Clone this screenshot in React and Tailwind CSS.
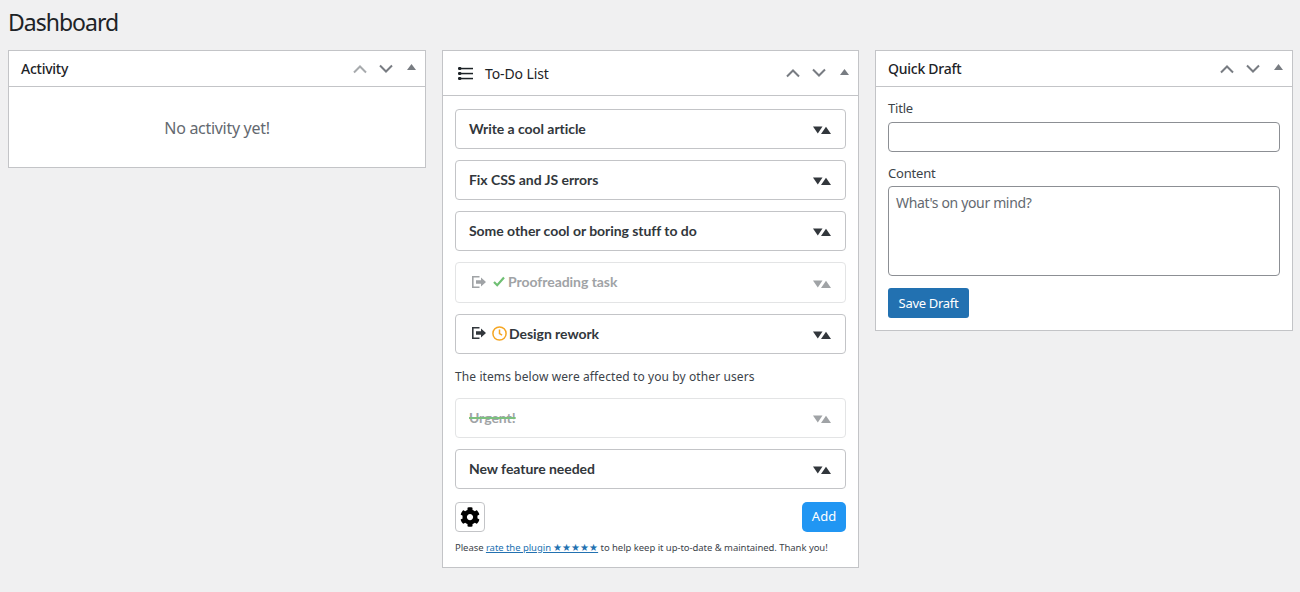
import { FaCog } from 'react-icons/fa';

const WP_FONT = "font-['Noto_Sans','Open_Sans',sans-serif]";
const ITEM_FONT = "font-['Lato','Open_Sans',sans-serif]";

function Handles({ upDisabled }) {
  return (
    <div className="flex items-center">
      <svg width="16" height="10" viewBox="0 0 16 10" fill="none" stroke="currentColor" strokeWidth="2" className={upDisabled ? 'text-[#a7aaad]' : 'text-[#787c82]'}>
        <path d="M2 8.5 8 2.5l6 6" />
      </svg>
      <svg width="16" height="10" viewBox="0 0 16 10" fill="none" stroke="currentColor" strokeWidth="2" className="ml-[10px] text-[#787c82]">
        <path d="M2 1.5l6 6 6-6" />
      </svg>
      <svg width="9" height="6" viewBox="0 0 9 6" className="ml-[13px] mb-[3px] fill-[#787c82]">
        <path d="M4.5 0 9 6H0z" />
      </svg>
    </div>
  );
}

function Card({ title, icon, tall, upDisabled, children }) {
  return (
    <section className="border border-[#c3c4c7] bg-white">
      <div className={`flex items-center justify-between border-b border-[#c3c4c7] pl-3 pr-[9px] ${tall ? 'h-[45px]' : 'h-[36px]'}`}>
        <div className="flex items-center">
          {icon}
          <h2 className={`text-[14px] text-[#1d2327] ${tall ? 'font-normal tracking-[-0.1px]' : 'font-medium tracking-[-0.25px]'}`}>{title}</h2>
        </div>
        <Handles upDisabled={upDisabled} />
      </div>
      {children}
    </section>
  );
}

function ListIcon() {
  return (
    <svg width="15" height="13" viewBox="0 0 15 13" className="ml-[3px] mr-[12px] fill-[#1d2327]">
      <rect x="0" y="0" width="3.4" height="3" rx="1.2" />
      <rect x="0" y="5" width="3.4" height="3" rx="1.2" />
      <rect x="0" y="10" width="3.4" height="3" rx="1.2" />
      <rect x="3" y="0.8" width="12" height="1.5" />
      <rect x="3" y="5.8" width="12" height="1.5" />
      <rect x="3" y="10.8" width="12" height="1.5" />
    </svg>
  );
}

function ExitIcon({ className }) {
  return (
    <svg width="14" height="12" viewBox="0 0 14 12" className={className}>
      <path d="M0 0h7.5v1.6H1.6v8.8h5.9V12H0z" fill="currentColor" />
      <path d="M4 4.3h5V1.6L14 6l-5 4.4V7.7H4z" fill="currentColor" />
    </svg>
  );
}

function Carets() {
  return (
    <svg width="18" height="8" viewBox="0 0 18 8" className="mt-[2px] fill-current">
      <path d="M0 .5h9.5L4.8 7.5z" />
      <path d="M13 .8 18 8H8z" />
    </svg>
  );
}

function TodoItem({ label, done, strike, exit, status, height = 'h-[40px]' }) {
  return (
    <div className={`flex items-center justify-between rounded-[4px] border pl-[13px] pr-[14px] ${height} ${done ? 'border-[#e3e4e5] text-[#a0a3a6]' : 'border-[#c3c4c7] text-[#32373c]'}`}>
      <div className={`flex items-center pb-[2px] text-[14px] font-bold tracking-[-0.05px] ${ITEM_FONT}`}>
        {exit && <ExitIcon className="ml-[3px] mr-[7px]" />}
        {status === 'check' && (
          <svg width="12" height="11" viewBox="0 0 12 11" fill="none" stroke="#6fbf73" strokeWidth="2.2" className="mr-[3px]">
            <path d="M1 6l3.2 3.2L11 1.5" />
          </svg>
        )}
        {status === 'clock' && (
          <svg width="15" height="15" viewBox="0 0 15 15" fill="none" stroke="#f5a623" strokeWidth="1.5" className="mr-[2px] -ml-[1px]">
            <circle cx="7.5" cy="7.5" r="6.6" />
            <path d="M7.5 3.6v4l2.6 1.5" />
          </svg>
        )}
        {strike ? (
          <span className="line-through decoration-[#7cc07f] decoration-2">{label}</span>
        ) : (
          <span>{label}</span>
        )}
      </div>
      <Carets />
    </div>
  );
}

export default function App() {
  return (
    <div className={`min-h-[592px] bg-[#f0f0f1] pl-2 pr-[7px] pt-[9px] ${WP_FONT}`}>
      <h1 className="h-[41px] text-[23px] leading-[27px] font-normal tracking-[-1px] text-[#1d2327]">Dashboard</h1>
      <div className="grid grid-cols-[418px_417px_418px] items-start gap-x-4">
        <Card title="Activity" upDisabled>
          <p className="h-[80px] pt-[30px] text-center text-[16px] leading-[22px] tracking-[-0.3px] text-[#646970]">No activity yet!</p>
        </Card>

        <Card title="To-Do List" icon={<ListIcon />} tall>
          <div className="px-3 pt-[13px]">
            <div className="flex flex-col gap-[11px]">
              <TodoItem label="Write a cool article" />
              <TodoItem label="Fix CSS and JS errors" />
              <TodoItem label="Some other cool or boring stuff to do" />
              <TodoItem label="Proofreading task" done exit status="check" height="h-[41px]" />
              <TodoItem label="Design rework" exit status="clock" />
            </div>
            <p className="h-[44px] pt-[14px] text-[12px] leading-[17px] tracking-[0.1px] text-[#3c434a]">The items below were affected to you by other users</p>
            <div className="flex flex-col gap-[11px]">
              <TodoItem label="Urgent!" done strike />
              <TodoItem label="New feature needed" />
            </div>
            <div className="mt-[13px] flex items-center justify-between">
              <button className="flex h-[30px] w-[30px] items-center justify-center rounded-[4px] border border-[#c3c4c7]">
                <FaCog size={20} className="text-black" />
              </button>
              <button className="h-[30px] w-[44px] rounded-[5px] bg-[#2196f3] text-[13px] text-white">Add</button>
            </div>
            <p className="h-[35px] pt-[9px] text-[9.5px] leading-[14px] tracking-[-0.05px] text-[#3c434a]">
              Please <a className="text-[#2271b1] underline">rate the plugin ★★★★★</a> to help keep it up-to-date &amp; maintained. Thank you!
            </p>
          </div>
        </Card>

        <Card title="Quick Draft">
          <div className="px-3 pb-3 pt-[11px]">
            <label className="block text-[13px] leading-[20px] tracking-[-0.2px] text-[#3c434a]">Title</label>
            <input className="mt-1 block h-[30px] w-full rounded-[4px] border border-[#8c8f94] bg-white" />
            <label className="mt-[11px] block text-[13px] leading-[20px] tracking-[-0.2px] text-[#3c434a]">Content</label>
            <textarea
              placeholder="What's on your mind?"
              className="mt-[3px] block h-[90px] w-full resize-none rounded-[4px] border border-[#8c8f94] bg-white px-[7px] py-[6px] text-[14px] leading-[20px] tracking-[-0.35px] placeholder:text-[#646970]"
            />
            <button className="mt-3 h-[30px] w-[81px] rounded-[3px] bg-[#2271b1] pt-[1px] text-[13px] tracking-[-0.3px] text-white">Save Draft</button>
          </div>
        </Card>
      </div>
    </div>
  );
}
